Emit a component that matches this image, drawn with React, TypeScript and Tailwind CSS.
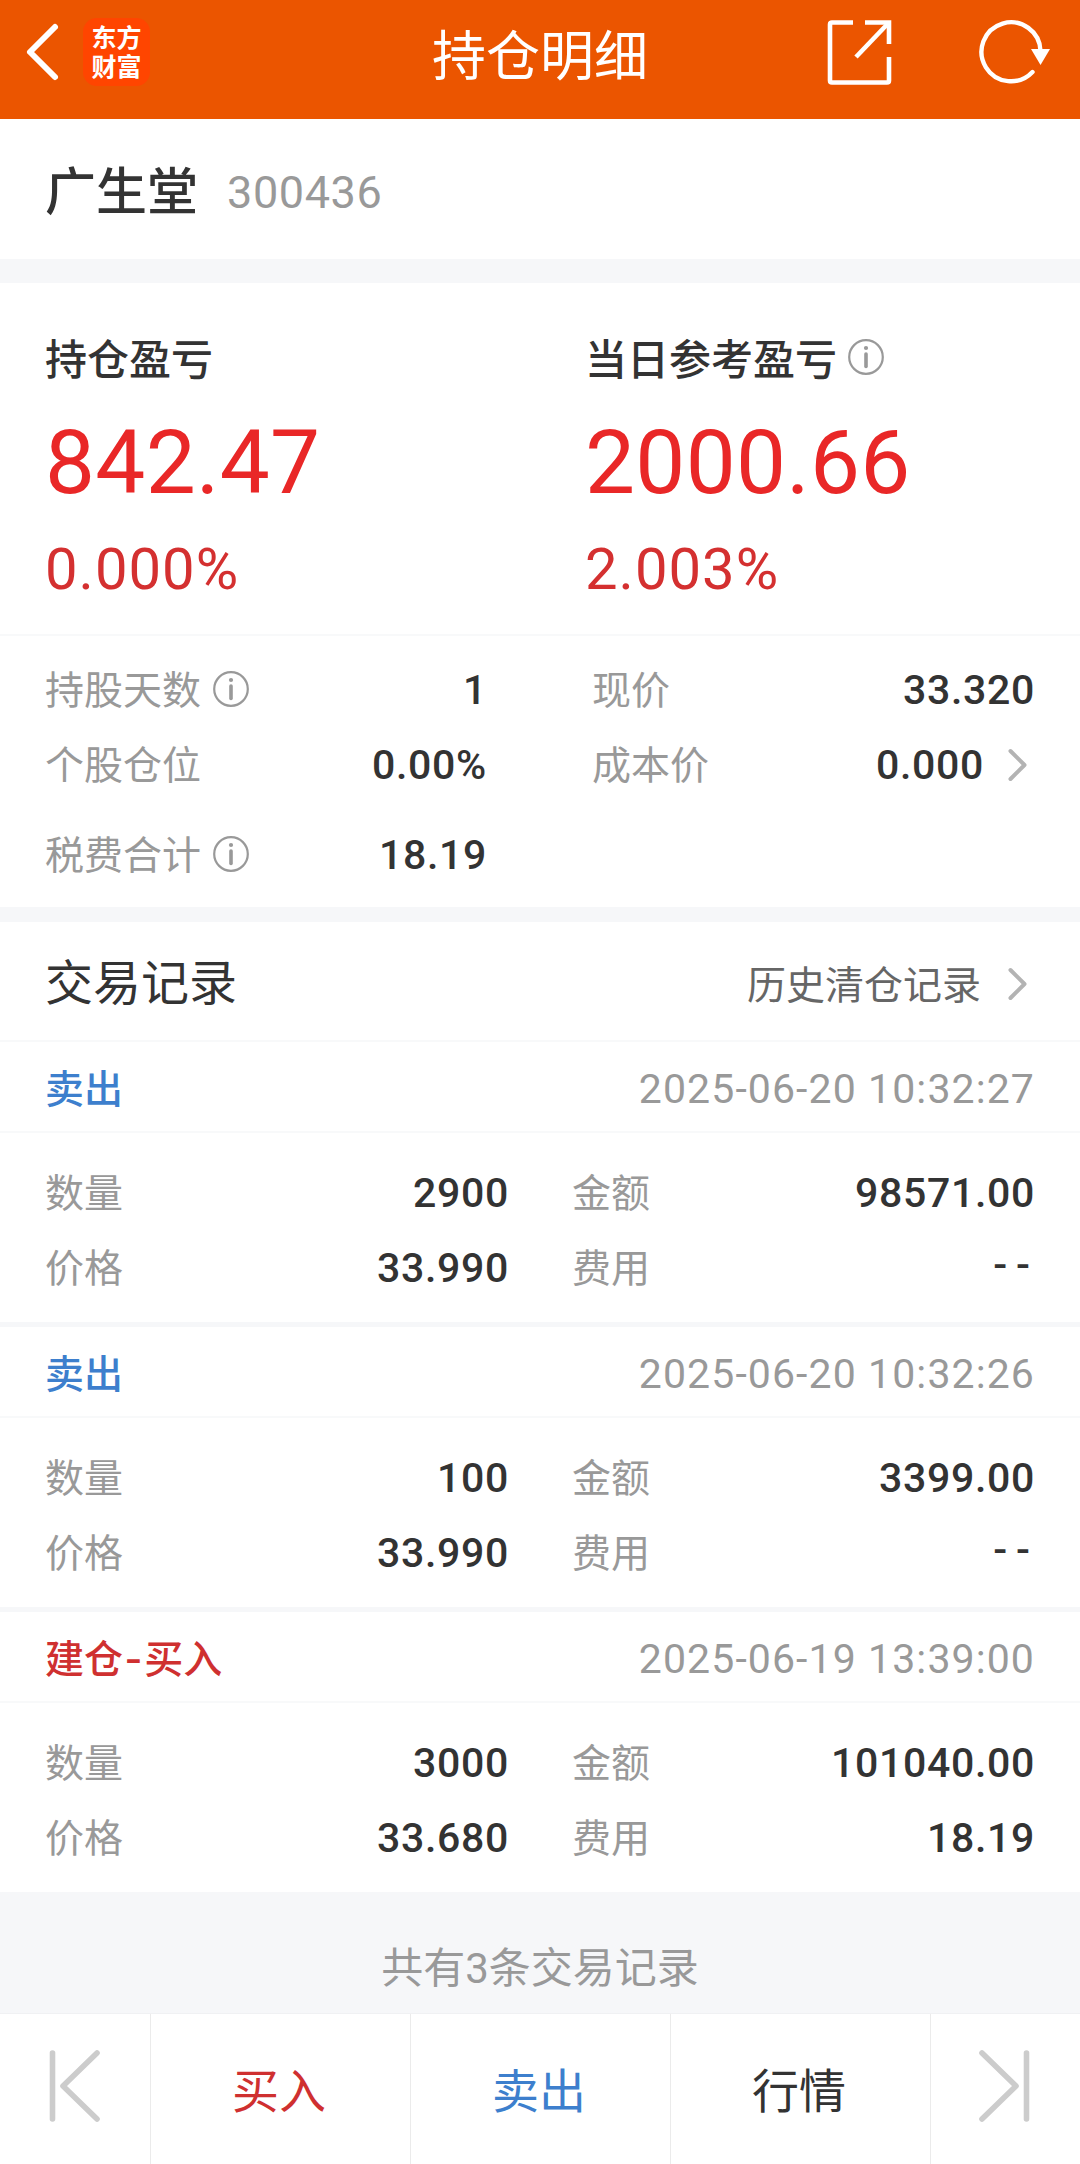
import React from 'react';

interface TradeRecord {
    action: string[];
    side: 'buy' | 'sell';
    time: string;
    quantity: string;
    price: string;
    amount: string;
    fee: string;
}

const records: TradeRecord[] = [
    { action: ['卖出'], side: 'sell', time: '2025-06-20 10:32:27', quantity: '2900', price: '33.990', amount: '98571.00', fee: '--' },
    { action: ['卖出'], side: 'sell', time: '2025-06-20 10:32:26', quantity: '100', price: '33.990', amount: '3399.00', fee: '--' },
    { action: ['建仓', '买入'], side: 'buy', time: '2025-06-19 13:39:00', quantity: '3000', price: '33.680', amount: '101040.00', fee: '18.19' },
];

const InfoIcon: React.FC = () => (
    <svg width="38" height="38" viewBox="0 0 38 38" fill="none" stroke="#999" className="shrink-0">
        <circle cx="19" cy="19" r="16.8" strokeWidth="2.2" />
        <path d="M19 16v12.5" strokeWidth="3.6" strokeLinecap="round" />
        <circle cx="19" cy="10" r="2.1" fill="#999" stroke="none" />
    </svg>
);

const ChevronRight: React.FC = () => (
    <svg width="22" height="36" viewBox="0 0 22 36" fill="none" stroke="#b3b3b3" strokeWidth="4" strokeLinecap="round" strokeLinejoin="round" className="shrink-0">
        <path d="M3.500 4l14 14-14 14" />
    </svg>
);

const EdgeIcon: React.FC<{ flip?: boolean }> = ({ flip }) => (
    <svg width="52" height="76" viewBox="0 0 52 76" fill="none" stroke="#ccc" strokeWidth="5.6" strokeLinecap="round" strokeLinejoin="round" className={flip ? '-scale-x-100' : ''}>
        <path d="M4.500 5v66" />
        <path d="M49 5L15 38l34 33" />
    </svg>
);

const Header: React.FC = () => (
    <header className="grid h-[119px] grid-cols-3 bg-[#eb5500] pb-[15px] text-white">
        <div className="flex items-center pl-6">
            <svg width="36" height="60" viewBox="0 0 36 60" fill="none" stroke="currentColor" strokeWidth="6" strokeLinecap="round" strokeLinejoin="round">
                <path d="M31 5L6 30l25 25" />
            </svg>
            <div className="ml-[23px] flex h-[68px] w-[67px] flex-col items-center justify-center rounded-[14px] bg-[#ff4500] pt-px text-[25px] leading-[29px] font-bold">
                <span>东方</span>
                <span>财富</span>
            </div>
        </div>
        <h1 className="pt-[18px] text-center text-[54px] leading-[80px]">持仓明细</h1>
        <div className="flex items-center justify-end pr-[27px]">
            <svg width="68" height="68" viewBox="0 0 68 68" fill="none" stroke="currentColor" strokeWidth="4.6" strokeLinejoin="round">
                <path d="M28 4.500H7q-2 0-2 2v56q0 2 2 2h55q2 0 2-2V39" />
                <path d="M40 4.500h24V26" strokeLinejoin="miter" />
                <path d="M63 5.500L31 39" />
            </svg>
            <svg width="76" height="68" viewBox="0 0 76 68" fill="none" stroke="currentColor" strokeWidth="4.4" className="ml-[84px]">
                <path d="M63.500 33A29.500 29.500 0 1 0 55.500 54" strokeLinecap="round" />
                <path d="M54 31h19l-9.500 16z" fill="currentColor" stroke="none" />
            </svg>
        </div>
    </header>
);

const Stat: React.FC<{ label: string; value: string; info?: boolean; arrow?: boolean }> = ({ label, value, info, arrow }) => (
    <div className="flex h-[75px] items-center">
        <span className="pt-[3px] text-[39px] text-[#999]">{label}</span>
        {info && <span className="-mt-0.5 ml-[11px]"><InfoIcon /></span>}
        <span className={`ml-auto text-[41px] font-medium text-[#333] ${value === '--' ? 'pb-1 tracking-[9px] -mr-1' : 'pt-[3px] tracking-[0.7px]'}`}>{value}</span>
        {arrow && <span className="mr-1.5 ml-[23px]"><ChevronRight /></span>}
    </div>
);

const Profit: React.FC<{ label: string; value: string; percent: string; info?: boolean }> = ({ label, value, percent, info }) => (
    <div>
        <div className="flex h-[60px] items-center text-[42px] font-medium text-[#333]">
            <span className="pt-0.5">{label}</span>
            {info && <span className="-mt-1 ml-2.5"><InfoIcon /></span>}
        </div>
        <div className="mt-6 h-[100px] text-[89px] leading-[100px] tracking-[0.3px] text-[#e92727]">{value}</div>
        <div className="mt-[21px] h-[70px] text-[58px] leading-[70px] tracking-[1px] text-[#d43030]">{percent}</div>
    </div>
);

const Record: React.FC<{ record: TradeRecord }> = ({ record }) => (
    <div className="h-[280px] bg-white">
        <div className="flex h-[91px] items-center justify-between border-b-2 border-[#f8f9fa] pt-[7px] pr-[45px] pl-[45px]">
            <span className={`flex text-[39px] font-medium ${record.side === 'buy' ? 'text-[#cf3030]' : 'text-[#3d7fcd]'}`}>
                {record.action[0]}
                {record.action[1] && <span className="mx-1 scale-x-125">-</span>}
                {record.action[1]}
            </span>
            <span className="text-[41px] tracking-[1.1px] text-[#999]">{record.time}</span>
        </div>
        <div className="grid grid-cols-[464px_463px] justify-between pt-[22px] pr-[45px] pl-[45px]">
            <Stat label="数量" value={record.quantity} />
            <Stat label="金额" value={record.amount} />
            <Stat label="价格" value={record.price} />
            <Stat label="费用" value={record.fee} />
        </div>
    </div>
);

export default function App() {
    return (
        <div className="flex h-[2164px] w-[1080px] flex-col overflow-hidden bg-[#f6f7f9] font-['Roboto','Noto_Sans_CJK_SC',sans-serif]">
            <Header />

            {/* Stock name and code */}
            <section className="flex h-[140px] items-center bg-white pt-2 pl-[45px]">
                <span className="text-[51px] font-medium text-[#333]">广生堂</span>
                <span className="ml-[29px] text-[45px] tracking-[0.6px] text-[#999]">300436</span>
            </section>

            {/* Profit summary */}
            <section className="mt-6 h-[624px] bg-white">
                <div className="grid h-[353px] grid-cols-[540px_1fr] border-b-2 border-[#f8f9fa] pt-[46px] pl-[45px]">
                    <Profit label="持仓盈亏" value="842.47" percent="0.000%" />
                    <Profit label="当日参考盈亏" value="2000.66" percent="2.003%" info />
                </div>
                <div className="flex justify-between pt-4 pr-[45px] pl-[45px]">
                    <div className="w-[442px]">
                        <Stat label="持股天数" value="1" info />
                        <Stat label="个股仓位" value="0.00%" />
                        <div className="mt-[15px]">
                            <Stat label="税费合计" value="18.19" info />
                        </div>
                    </div>
                    <div className="w-[443px]">
                        <Stat label="现价" value="33.320" />
                        <Stat label="成本价" value="0.000" arrow />
                    </div>
                </div>
            </section>

            {/* Trade records */}
            <section className="mt-[15px]">
                <div className="flex h-[120px] items-center border-b-2 border-[#f8f9fa] bg-white pt-1.5 pr-[51px] pl-[45px]">
                    <h2 className="text-[48px] text-[#333]">交易记录</h2>
                    <span className="mt-1 ml-auto text-[39px] text-[#666]">历史清仓记录</span>
                    <span className="ml-[26px]"><ChevronRight /></span>
                </div>
                <div className="flex flex-col gap-[5px]">
                    {records.map((record) => (
                        <Record key={record.time} record={record} />
                    ))}
                </div>
            </section>
            <p className="mt-[47px] text-center text-[42px] leading-[60px] text-[#999]">共有3条交易记录</p>

            {/* Bottom bar */}
            <nav className="mt-auto grid h-[151px] grid-cols-[151px_260px_260px_260px_1fr] divide-x divide-[#ebebeb] border-t border-[#f0f1f3] bg-white text-[47px]">
                <button className="flex items-center justify-center pr-0.5 pb-1.5"><EdgeIcon /></button>
                <button className="pt-1.5 pr-[3px] text-[#cf3030]">买入</button>
                <button className="pt-1.5 pr-[3px] text-[#3d7fcd]">卖出</button>
                <button className="pt-1.5 pr-[3px] text-[#333]">行情</button>
                <button className="flex items-center justify-center pr-px pb-1.5"><EdgeIcon flip /></button>
            </nav>
        </div>
    );
}
